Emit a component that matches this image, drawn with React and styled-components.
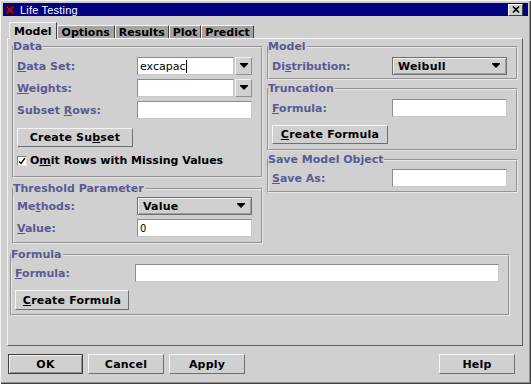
import React from "react"
import styled, { createGlobalStyle } from "styled-components"

const GlobalStyle = createGlobalStyle`
  html, body {
    margin: 0;
    padding: 0;
    background: #d0d0d0;
  }
  body {
    font-family: "DejaVu Sans", "Liberation Sans", sans-serif;
    font-size: 11px;
  }
`

const Window = styled.div`
  width: 531px;
  height: 384px;
  box-sizing: border-box;
  padding: 3px;
  background: #d0d0d0;
  display: flex;
  flex-direction: column;
  box-shadow: inset 1px 1px 0 #f4f4f4, inset -1px -1px 0 #404040, inset -2px -2px 0 #909090;
`

const TitleBar = styled.div`
  height: 13px;
  background: #000080;
  display: flex;
  align-items: center;
  padding: 0 2px 0 2px;
  color: #fff;
  font-family: "Liberation Sans", sans-serif;
  font-size: 11px;
`

const TitleText = styled.span`
  margin-left: 5px;
  flex: 1;
  letter-spacing: 0.2px;
`

const CloseBox = styled.div`
  width: 15px;
  height: 12px;
  margin-right: 3px;
  box-sizing: border-box;
  background: #d0d0d0;
  border: 1px solid;
  border-color: #fff #404040 #404040 #fff;
  display: flex;
  align-items: center;
  justify-content: center;
`

const Body = styled.div`
  flex: 1;
  display: flex;
  flex-direction: column;
  padding: 6px 5px 0 4px;
`

const TabRow = styled.div`
  display: flex;
  align-items: flex-end;
  height: 16px;
  padding-left: 2px;
  position: relative;
  z-index: 1;
`

const Tab = styled.div`
  height: ${(p) => (p.$active ? "17px" : "13px")};
  margin-bottom: ${(p) => (p.$active ? "-1px" : "0")};
  box-sizing: border-box;
  padding: 0 ${(p) => p.$pad || 4}px;
  background: ${(p) => (p.$active ? "#d0d0d0" : "#a4a4a4")};
  border-top: 1px solid #f4f4f4;
  border-left: 1px solid #f4f4f4;
  border-right: 1px solid #404040;
  display: flex;
  align-items: ${(p) => (p.$active ? "flex-start" : "center")};
  padding-top: ${(p) => (p.$active ? "2px" : "0")};
  font-weight: bold;
  color: #000;
  white-space: nowrap;
`

const Panel = styled.div`
  height: 308px;
  box-sizing: border-box;
  border: 1px solid;
  border-color: #f4f4f4 #606060 #606060 #f4f4f4;
  padding: 1px 4px 0 4px;
  display: flex;
  flex-direction: column;
`

const Columns = styled.div`
  display: grid;
  grid-template-columns: 251px 251px;
  column-gap: 4px;
  align-items: start;
`

const Column = styled.div`
  display: flex;
  flex-direction: column;
  gap: ${(p) => p.$gap}px;
`

const Group = styled.fieldset`
  margin: 0;
  min-width: 0;
  padding: ${(p) => p.$top ?? 4}px 7px ${(p) => p.$bottom || 6}px 3px;
  border: 2px groove #e8e8e8;
  display: flex;
  flex-direction: column;
  gap: 4px;
`

const WideGroup = styled(Group)`
  margin: 4px 8px 0 -2px;
`

const Legend = styled.legend`
  padding: 0 1px 0 0;
  margin-left: -4px;
  font-weight: bold;
  color: #5a5a96;
  line-height: 13px;
`

const Row = styled.div`
  display: grid;
  grid-template-columns: 120px ${(p) => p.$w || 115}px;
  align-items: center;
  height: 18px;
`

const Label = styled.span`
  font-weight: bold;
  color: #5a5a96;
  white-space: nowrap;
`

const TextBox = styled.div`
  height: 18px;
  box-sizing: border-box;
  background: #fff;
  border: 1px solid;
  border-color: #8c8c8c #c8c8c8 #c8c8c8 #8c8c8c;
  display: flex;
  align-items: center;
  padding-left: 2px;
  font-size: 11px;
  color: #000;
`

const EditCombo = styled.div`
  display: flex;
  height: 18px;
`

const EditField = styled(TextBox)`
  flex: 1;
`

const Caret = styled.span`
  width: 1px;
  height: 13px;
  background: #000;
  margin-left: 1px;
`

const ArrowButton = styled.div`
  width: 17px;
  box-sizing: border-box;
  margin-left: 1px;
  border: 1px solid;
  border-color: #f4f4f4 #909090 #909090 #f4f4f4;
  display: flex;
  align-items: center;
  justify-content: center;
`

const Arrow = styled.span`
  width: 0;
  height: 0;
  border-left: 4px solid transparent;
  border-right: 4px solid transparent;
  border-top: 4px solid #000;
  box-shadow: 0 -1px 0 #000;
`

const Choice = styled.div`
  height: 18px;
  box-sizing: border-box;
  border: 1px solid #707070;
  box-shadow: inset 1px 1px 0 #f4f4f4, inset -1px -1px 0 #a0a0a0;
  display: flex;
  align-items: center;
  justify-content: space-between;
  padding: 0 6px 0 5px;
  font-weight: bold;
  color: #000;
  letter-spacing: 0.2px;
`

const Button = styled.div`
  width: ${(p) => p.$w}px;
  height: ${(p) => p.$h || 19}px;
  box-sizing: border-box;
  border: 1px solid;
  border-color: ${(p) => (p.$default ? "#404040" : "#f4f4f4 #707070 #707070 #f4f4f4")};
  box-shadow: ${(p) => (p.$default ? "inset 1px 1px 0 #f4f4f4, inset -1px -1px 0 #909090" : "none")};
  display: flex;
  align-items: center;
  justify-content: center;
  font-weight: bold;
  color: #000;
  letter-spacing: 0.2px;
  white-space: nowrap;
`

const ButtonSlot = styled.div`
  padding-top: ${(p) => p.$top}px;
`

const CheckRow = styled.div`
  display: flex;
  align-items: center;
  height: 13px;
  margin-top: 3px;
  font-weight: bold;
  color: #000;
`

const CheckBox = styled.div`
  width: 10px;
  height: 10px;
  box-sizing: border-box;
  border: 1px solid;
  border-color: #808080 #e0e0e0 #e0e0e0 #808080;
  background: #fff;
  margin: 0 3px 0 0;
  display: flex;
  align-items: center;
  justify-content: center;
`

const ButtonBar = styled.div`
  display: flex;
  gap: 5px;
  margin-top: 8px;
  padding: 0 8px 0 1px;
`

const Spacer = styled.div`
  flex: 1;
`

const Formula = styled(TextBox)`
  font-size: 10px;
`

const DropArrow = () => (
  <ArrowButton>
    <Arrow />
  </ArrowButton>
)

const AppIcon = () => (
  <svg width="10" height="10" viewBox="0 0 10 10">
    <path d="M1 1 L9 9 M9 1 L1 9" stroke="#300" strokeWidth="3" />
    <path d="M1.5 1.5 L8.5 8.5 M8.5 1.5 L1.5 8.5" stroke="#e00000" strokeWidth="1.5" />
  </svg>
)

const CloseIcon = () => (
  <svg width="8" height="7" viewBox="0 0 8 7">
    <path d="M1 0.5 L7 6.5 M7 0.5 L1 6.5" stroke="#000" strokeWidth="1.6" />
  </svg>
)

const Tick = () => (
  <svg width="8" height="8" viewBox="0 0 8 8">
    <path d="M1 4.5 L3 6.5 L7 1" stroke="#000" strokeWidth="1.3" fill="none" />
  </svg>
)

const App = () => {
  return (
    <>
      <GlobalStyle />
      <Window>
        <TitleBar>
          <AppIcon />
          <TitleText>Life Testing</TitleText>
          <CloseBox>
            <CloseIcon />
          </CloseBox>
        </TitleBar>
        <Body>
          <TabRow>
            <Tab $active>Model</Tab>
            <Tab>Options</Tab>
            <Tab $pad={3}>Results</Tab>
            <Tab $pad={3}>Plot</Tab>
            <Tab $pad={3}>Predict</Tab>
          </TabRow>
          <Panel>
            <Columns>
              <Column $gap={4}>
                <Group $bottom={9}>
                  <Legend>Data</Legend>
                  <Row>
                    <Label>
                      <u>D</u>ata Set:
                    </Label>
                    <EditCombo>
                      <EditField>
                        excapac
                        <Caret />
                      </EditField>
                      <DropArrow />
                    </EditCombo>
                  </Row>
                  <Row>
                    <Label>
                      <u>W</u>eights:
                    </Label>
                    <EditCombo>
                      <EditField />
                      <DropArrow />
                    </EditCombo>
                  </Row>
                  <Row>
                    <Label>
                      Subset <u>R</u>ows:
                    </Label>
                    <TextBox />
                  </Row>
                  <ButtonSlot $top={5}>
                    <Button $w={116}>
                      Create Su<u>b</u>set
                    </Button>
                  </ButtonSlot>
                  <CheckRow>
                    <CheckBox>
                      <Tick />
                    </CheckBox>
                    O<u>m</u>it Rows with Missing Values
                  </CheckRow>
                </Group>
                <Group $top={2} $bottom={5}>
                  <Legend>Threshold Parameter</Legend>
                  <Row>
                    <Label>
                      Me<u>t</u>hods:
                    </Label>
                    <Choice>
                      Value
                      <Arrow />
                    </Choice>
                  </Row>
                  <Row>
                    <Label>
                      <u>V</u>alue:
                    </Label>
                    <Formula>0</Formula>
                  </Row>
                </Group>
              </Column>
              <Column $gap={2}>
                <Group $bottom={3}>
                  <Legend>Model</Legend>
                  <Row>
                    <Label>
                      Di<u>s</u>tribution:
                    </Label>
                    <Choice>
                      Weibull
                      <Arrow />
                    </Choice>
                  </Row>
                </Group>
                <Group $bottom={5}>
                  <Legend>Truncation</Legend>
                  <Row>
                    <Label>
                      <u>F</u>ormula:
                    </Label>
                    <TextBox />
                  </Row>
                  <ButtonSlot $top={4}>
                    <Button $w={116}>
                      <u>C</u>reate Formula
                    </Button>
                  </ButtonSlot>
                </Group>
                <Group $top={3} $bottom={4}>
                  <Legend>Save Model Object</Legend>
                  <Row>
                    <Label>
                      <u>S</u>ave As:
                    </Label>
                    <TextBox />
                  </Row>
                </Group>
              </Column>
            </Columns>
            <WideGroup $top={3} $bottom={4}>
              <Legend>Formula</Legend>
              <Row $w={364}>
                <Label>
                  <u>F</u>ormula:
                </Label>
                <TextBox />
              </Row>
              <ButtonSlot $top={4}>
                <Button $w={114} $h={20}>
                  <u>C</u>reate Formula
                </Button>
              </ButtonSlot>
            </WideGroup>
          </Panel>
          <ButtonBar>
            <Button $w={75} $h={20} $default>
              OK
            </Button>
            <Button $w={76} $h={20}>
              Cancel
            </Button>
            <Button $w={76} $h={20}>
              Apply
            </Button>
            <Spacer />
            <Button $w={76} $h={20}>
              Help
            </Button>
          </ButtonBar>
        </Body>
      </Window>
    </>
  )
}

export default App
